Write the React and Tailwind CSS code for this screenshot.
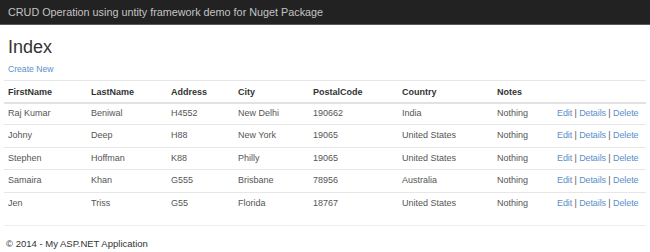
import React from "react";

const people = [
  ["Raj Kumar", "Beniwal", "H4552", "New Delhi", "190662", "India", "Nothing"],
  ["Johny", "Deep", "H88", "New York", "19065", "United States", "Nothing"],
  ["Stephen", "Hoffman", "K88", "Philly", "19065", "United States", "Nothing"],
  ["Samaira", "Khan", "G555", "Brisbane", "78956", "Australia", "Nothing"],
  ["Jen", "Triss", "G55", "Florida", "18767", "United States", "Nothing"],
];

const cols = [
  { label: "FirstName", w: "w-[83px]" },
  { label: "LastName", w: "w-[80px]" },
  { label: "Address", w: "w-[67px]" },
  { label: "City", w: "w-[75px]" },
  { label: "PostalCode", w: "w-[89px]" },
  { label: "Country", w: "w-[95px]" },
  { label: "Notes", w: "w-[60px]" },
  { label: "", w: "" },
];

const App = () => {
  return (
    <div className="w-[650px] h-[252px] bg-white font-['Liberation_Sans',Arial,sans-serif] overflow-hidden">
      {/* Navbar */}
      <div className="h-[25px] bg-[#222] border-b border-[#5a5a5a] flex items-center pl-[8px]">
        <span className="text-[10.8px] text-[#c4c4c4] leading-none">
          CRUD Operation using untity framework demo for Nuget Package
        </span>
      </div>

      <div className="px-[4px]">
        <h2 className="pl-[4px] mt-[11px] text-[18px] leading-[22px] text-[#333]">
          Index
        </h2>
        <p className="pl-[4px] mt-[5px] text-[8.6px] leading-[13px]">
          <a className="text-[#5b8fc9]">Create New</a>
        </p>

        {/* Table */}
        <table className="table-fixed w-full mt-[4px] border-collapse text-[9px]">
          <thead>
            <tr className="border-t border-[#e6e6e6] border-b-2 border-b-[#e2e2e2]">
              {cols.map((c, i) => (
                <th
                  key={i}
                  className={`${c.w} h-[22px] pt-[2px] px-[4px] text-left font-bold text-[#333]`}
                >
                  {c.label}
                </th>
              ))}
            </tr>
          </thead>
          <tbody>
            {people.map((row, r) => (
              <tr
                key={r}
                className={r < people.length - 1 ? "border-b border-[#e6e6e6]" : ""}
              >
                {row.map((cell, i) => (
                  <td key={i} className="h-[22.4px] px-[4px] text-[#555] whitespace-nowrap">
                    {cell}
                  </td>
                ))}
                <td className="h-[22.4px] px-[4px] whitespace-nowrap text-[#555] tracking-[-0.1px]">
                  <a className="text-[#5b8fc9]">Edit</a> |{" "}
                  <a className="text-[#5b8fc9]">Details</a> |{" "}
                  <a className="text-[#5b8fc9]">Delete</a>
                </td>
              </tr>
            ))}
          </tbody>
        </table>

        {/* Footer */}
        <hr className="mt-[11px] border-t border-[#eee]" />
        <p className="pl-[2px] mt-[11px] text-[9.5px] leading-[13px] text-[#333]">
          © 2014 - My ASP.NET Application
        </p>
      </div>
    </div>
  );
};

export default App;
